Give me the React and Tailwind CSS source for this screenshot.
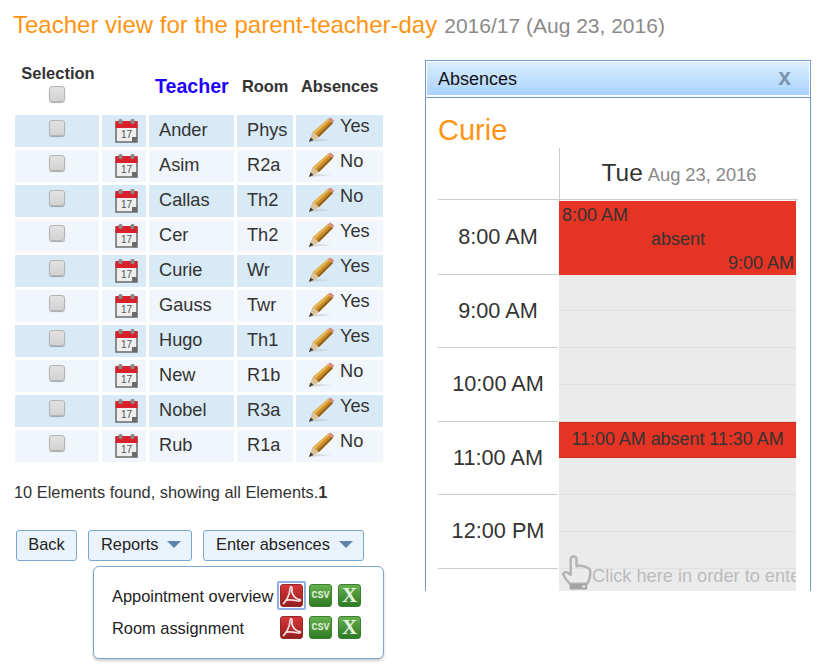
import React from 'react';

const teachers = [
    { name: 'Ander', room: 'Phys', absent: 'Yes' },
    { name: 'Asim', room: 'R2a', absent: 'No' },
    { name: 'Callas', room: 'Th2', absent: 'No' },
    { name: 'Cer', room: 'Th2', absent: 'Yes' },
    { name: 'Curie', room: 'Wr', absent: 'Yes' },
    { name: 'Gauss', room: 'Twr', absent: 'Yes' },
    { name: 'Hugo', room: 'Th1', absent: 'Yes' },
    { name: 'New', room: 'R1b', absent: 'No' },
    { name: 'Nobel', room: 'R3a', absent: 'Yes' },
    { name: 'Rub', room: 'R1a', absent: 'No' },
];

const hours = ['8:00 AM', '9:00 AM', '10:00 AM', '11:00 AM', '12:00 PM'];

const Checkbox = () => (
    <span className="inline-block w-4 h-4 rounded-[3px] border border-[#b4b4b4] bg-linear-to-b from-[#e2e2e2] to-[#d2d2d2] shadow-[0_1px_1px_rgba(0,0,0,0.3)]" />
);

const CalendarIcon = () => (
    <svg width="23" height="25" viewBox="0 0 23 25" className="block">
        <rect x="1" y="5" width="21" height="19" fill="#eeeeee" stroke="#6a6a6a" strokeWidth="1.5" />
        <rect x="0.5" y="3" width="22" height="7" fill="#d8212b" />
        <rect x="3.5" y="1" width="4" height="5" rx="1.5" fill="#8a8a8a" />
        <rect x="15.5" y="1" width="4" height="5" rx="1.5" fill="#8a8a8a" />
        <text x="6" y="20" fontSize="10" fill="#555" fontFamily="Liberation Sans, sans-serif">17</text>
        <rect x="17" y="19" width="5" height="5" fill="#6a6a6a" />
    </svg>
);

const PencilIcon = () => (
    <svg width="26" height="26" viewBox="0 0 26 26" className="block">
        <path d="M2 25 L24 23 L7 22 Z" fill="#bbb" opacity="0.5" />
        <path d="M1 25 L5 15 L20 2 L25 6 L11 20 Z" fill="#c98c2a" />
        <path d="M5 15 L20 2 L21.5 3.5 L7 17 Z" fill="#e8b655" />
        <path d="M9 19 L23.5 5 L25 6 L11 20 Z" fill="#8f5f18" />
        <path d="M1 25 L5 15 L11 20 Z" fill="#dcc398" />
        <path d="M1 25 L2.5 20.5 L5.5 23 Z" fill="#3a3a3a" />
        <path d="M20 2 L22.5 0.5 L26 3.5 L25 6 Z" fill="#d98a80" />
    </svg>
);

const PdfIcon = () => (
    <span className="block w-[23px] h-[23px] rounded-[3px] bg-linear-to-b from-[#d9343a] to-[#94201f] border border-[#9a2a2a]">
        <svg width="21" height="21" viewBox="0 0 21 21" className="block">
            <path d="M2 19 C5 17 9 9 9 4 C9 1 11.5 1.5 11 4 C10 9 14 14 19 14.5 C20 15 19 16.5 17 16 C12 15 6 14 4 16" fill="none" stroke="#f2dede" strokeWidth="1.7" />
        </svg>
    </span>
);

const CsvIcon = () => (
    <span className="flex items-center justify-center w-[23px] h-[23px] rounded-[3px] bg-linear-to-b from-[#66b14e] to-[#2f7a26] border border-[#3b7f30]">
        <span className="text-[10px] leading-none font-bold text-[#dff0d8] font-['Liberation_Mono',monospace]">CSV</span>
    </span>
);

const XlsIcon = () => (
    <span className="flex items-center justify-center w-[23px] h-[23px] rounded-[3px] bg-linear-to-b from-[#66b14e] to-[#2f7a26] border border-[#3b7f30]">
        <span className="text-[21px] leading-none font-bold text-[#e6f3e0] font-['Liberation_Serif',serif]">X</span>
    </span>
);

const HandIcon = () => (
    <svg width="31" height="37" viewBox="0 0 32 37" className="block shrink-0">
        <path d="M2 20 C4 17 7 18 10 21 L10 5 C10 1 16 1 16 5 L16 12 C20 11 28 12 30 16 C31 22 29 27 27 30 L9 30 C6 27 4 24 2 20 Z" fill="none" stroke="#b4b4b4" strokeWidth="2.5" strokeLinejoin="round" />
        <rect x="9" y="30" width="18" height="6" rx="1" fill="#a4a4a4" />
        <rect x="22" y="32" width="3" height="2" fill="#eee" />
    </svg>
);

const Button = ({ children, caret, className }) => (
    <button className={`flex items-center h-[31px] pb-[2px] rounded-[3px] border border-[#7ba6cc] bg-[#eaf3fb] text-[16.4px] text-[#222] ${className}`}>
        {children}
        {caret && <span className="ml-[9px] w-0 h-0 border-x-[7px] border-x-transparent border-t-[7px] border-t-[#5f86aa]" />}
    </button>
);

const App = () => {
    return (
        <div className="w-[816px] h-[666px] overflow-hidden bg-white font-['Liberation_Sans',sans-serif] text-[#333]">
            <div className="h-[50px] pl-[13px] pt-[10px] whitespace-nowrap leading-[30px]">
                <span className="text-[24px] text-[#ff9412]">Teacher view for the parent-teacher-day</span>
                <span className="ml-[7px] text-[21px] text-[#8a8a8a]">2016/17 (Aug 23, 2016)</span>
            </div>

            <div className="flex">
                <div className="relative w-[425px] shrink-0">
                    <table className="table-fixed w-[374px] ml-3 mt-[9px] border-separate border-spacing-[3px] text-[18.2px]">
                        <colgroup>
                            <col className="w-[84px]" />
                            <col className="w-[44px]" />
                            <col className="w-[85px]" />
                            <col className="w-[56px]" />
                            <col className="w-[87px]" />
                        </colgroup>
                        <thead>
                            <tr className="h-[50px]">
                                <th className="align-top font-bold text-[16.5px] leading-[22px] whitespace-nowrap pl-[2px]">
                                    <div>Selection</div>
                                    <div className="mt-[2px] pr-[2px] leading-none"><Checkbox /></div>
                                </th>
                                <th />
                                <th className="text-[19.6px] font-bold text-[#2200ff] text-left pl-[6px] whitespace-nowrap">Teacher</th>
                                <th className="text-[16.4px] font-bold text-left pl-[5px] pb-[2px]">Room</th>
                                <th className="text-[16.4px] font-bold text-left pl-[5px] pb-[2px] whitespace-nowrap">Absences</th>
                            </tr>
                        </thead>
                        <tbody>
                            {teachers.map((t, i) => {
                                const bg = i % 2 === 0 ? 'bg-[#d9eaf7]' : 'bg-[#f0f6fb]';
                                return (
                                    <tr key={t.name} className="h-8">
                                        <td className={`${bg} text-center`}>
                                            <div className="flex justify-center pb-[6px]"><Checkbox /></div>
                                        </td>
                                        <td className={bg}>
                                            <div className="flex justify-end pr-2 pb-[2px]"><CalendarIcon /></div>
                                        </td>
                                        <td className={`${bg} pl-[10px]`}>{t.name}</td>
                                        <td className={`${bg} pl-[10px]`}>{t.room}</td>
                                        <td className={bg}>
                                            <div className="flex items-start pl-3 h-8 pt-[2px]">
                                                <PencilIcon />
                                                <span className="ml-[6px] mt-[-3px] leading-[24px]">{t.absent}</span>
                                            </div>
                                        </td>
                                    </tr>
                                );
                            })}
                        </tbody>
                    </table>

                    <div className="mt-[17px] pl-[14px] text-[16.4px] leading-5 text-[#333]">
                        10 Elements found, showing all Elements.<b>1</b>
                    </div>

                    <div className="relative flex gap-[11px] mt-[28px] ml-4">
                        <Button className="w-[61px] justify-center">Back</Button>
                        <Button caret className="w-[104px] pl-3">Reports</Button>
                        <Button caret className="w-[161px] pl-3">Enter absences</Button>

                        <div className="absolute left-[77px] top-[36px] w-[291px] h-[93px] rounded-[6px] border border-[#7ba6cc] bg-white shadow-[0_2px_3px_rgba(0,0,0,0.2)] text-[16.4px] text-[#222]">
                            <div className="flex items-center mt-[14px] ml-[18px] h-[29px]">
                                <span className="w-[166px] pt-[2px] whitespace-nowrap">Appointment overview</span>
                                <span className="p-[1px] rounded-[2px] border-2 border-[#8fb0e0] -ml-[1px] mr-[2px]"><PdfIcon /></span>
                                <span className="ml-[1px] mr-[6px]"><CsvIcon /></span>
                                <XlsIcon />
                            </div>
                            <div className="flex items-center mt-[3px] ml-[18px] h-[29px]">
                                <span className="w-[168px] pt-[2px] whitespace-nowrap">Room assignment</span>
                                <span className="mr-[6px]"><PdfIcon /></span>
                                <span className="mr-[6px]"><CsvIcon /></span>
                                <XlsIcon />
                            </div>
                        </div>
                    </div>
                </div>

                <div className="mt-[10px] w-[386px] h-[531px] shrink-0 overflow-hidden border-x border-t border-[#6f9bc4]">
                    <div className="p-[1px] border-b border-[#6f9bc4] h-[37px]">
                        <div className="flex items-center justify-between h-[33px] pl-[11px] pr-[18px] pt-[1px] bg-linear-to-b from-[#dcedff] to-[#a9d3ff] text-[18px] text-[#111]">
                            <span>Absences</span>
                            <span className="text-[23px] font-bold text-[#7f97ad] leading-none pb-[4px]">x</span>
                        </div>
                    </div>

                    <div className="pl-3 pt-[13px] h-[50px] text-[29px] leading-[38px] text-[#ff9412]">Curie</div>

                    <div className="flex h-[52px]">
                        <div className="w-[121px] ml-3 border-b border-[#ccc]" />
                        <div className="w-[239px] border-l border-b border-[#ccc] flex items-baseline justify-center pt-[9px] leading-[32px]">
                            <span className="text-[24.5px] text-[#333]">Tue</span>
                            <span className="ml-[5px] text-[18.3px] text-[#888]">Aug 23, 2016</span>
                        </div>
                    </div>

                    <div className="relative flex pt-[1px]">
                        <div className="ml-3 w-[120px]">
                            {hours.map(h => (
                                <div key={h} className="flex items-center justify-center h-[73.6px] border-b border-[#ccc] text-[21.7px]">{h}</div>
                            ))}
                        </div>
                        <div className="ml-[1px] w-[237px] bg-[#ebebeb] h-[400px]">
                            {hours.map(h => (
                                <div key={h} className="h-[73.6px] border-b border-[#e0e0e0]">
                                    <div className="h-[36.5px] border-b border-dotted border-[#d4d4d4]" />
                                </div>
                            ))}
                        </div>

                        <div className="absolute left-[133px] top-[1px] w-[237px] h-[74px] bg-[#e53424] text-[18px] leading-6 pl-[3px] pr-[2px] pt-[2px] text-[#333]">
                            <div>8:00 AM</div>
                            <div className="text-center">absent</div>
                            <div className="text-right">9:00 AM</div>
                        </div>
                        <div className="absolute left-[133px] top-[222px] w-[237px] h-[36px] bg-[#e53424] border-y border-[#c92c1e] text-[17.9px] leading-[33px] text-center whitespace-nowrap text-[#333]">
                            11:00 AM absent 11:30 AM
                        </div>
                        <div className="absolute left-[135px] top-[351px] w-[235px] h-[40px] overflow-hidden flex items-end whitespace-nowrap text-[18.2px] text-[#bbb]">
                            <HandIcon />
                            <span className="leading-[26px] mb-[2px]">Click here in order to enter</span>
                        </div>
                    </div>
                </div>
            </div>
        </div>
    );
};

export default App;
